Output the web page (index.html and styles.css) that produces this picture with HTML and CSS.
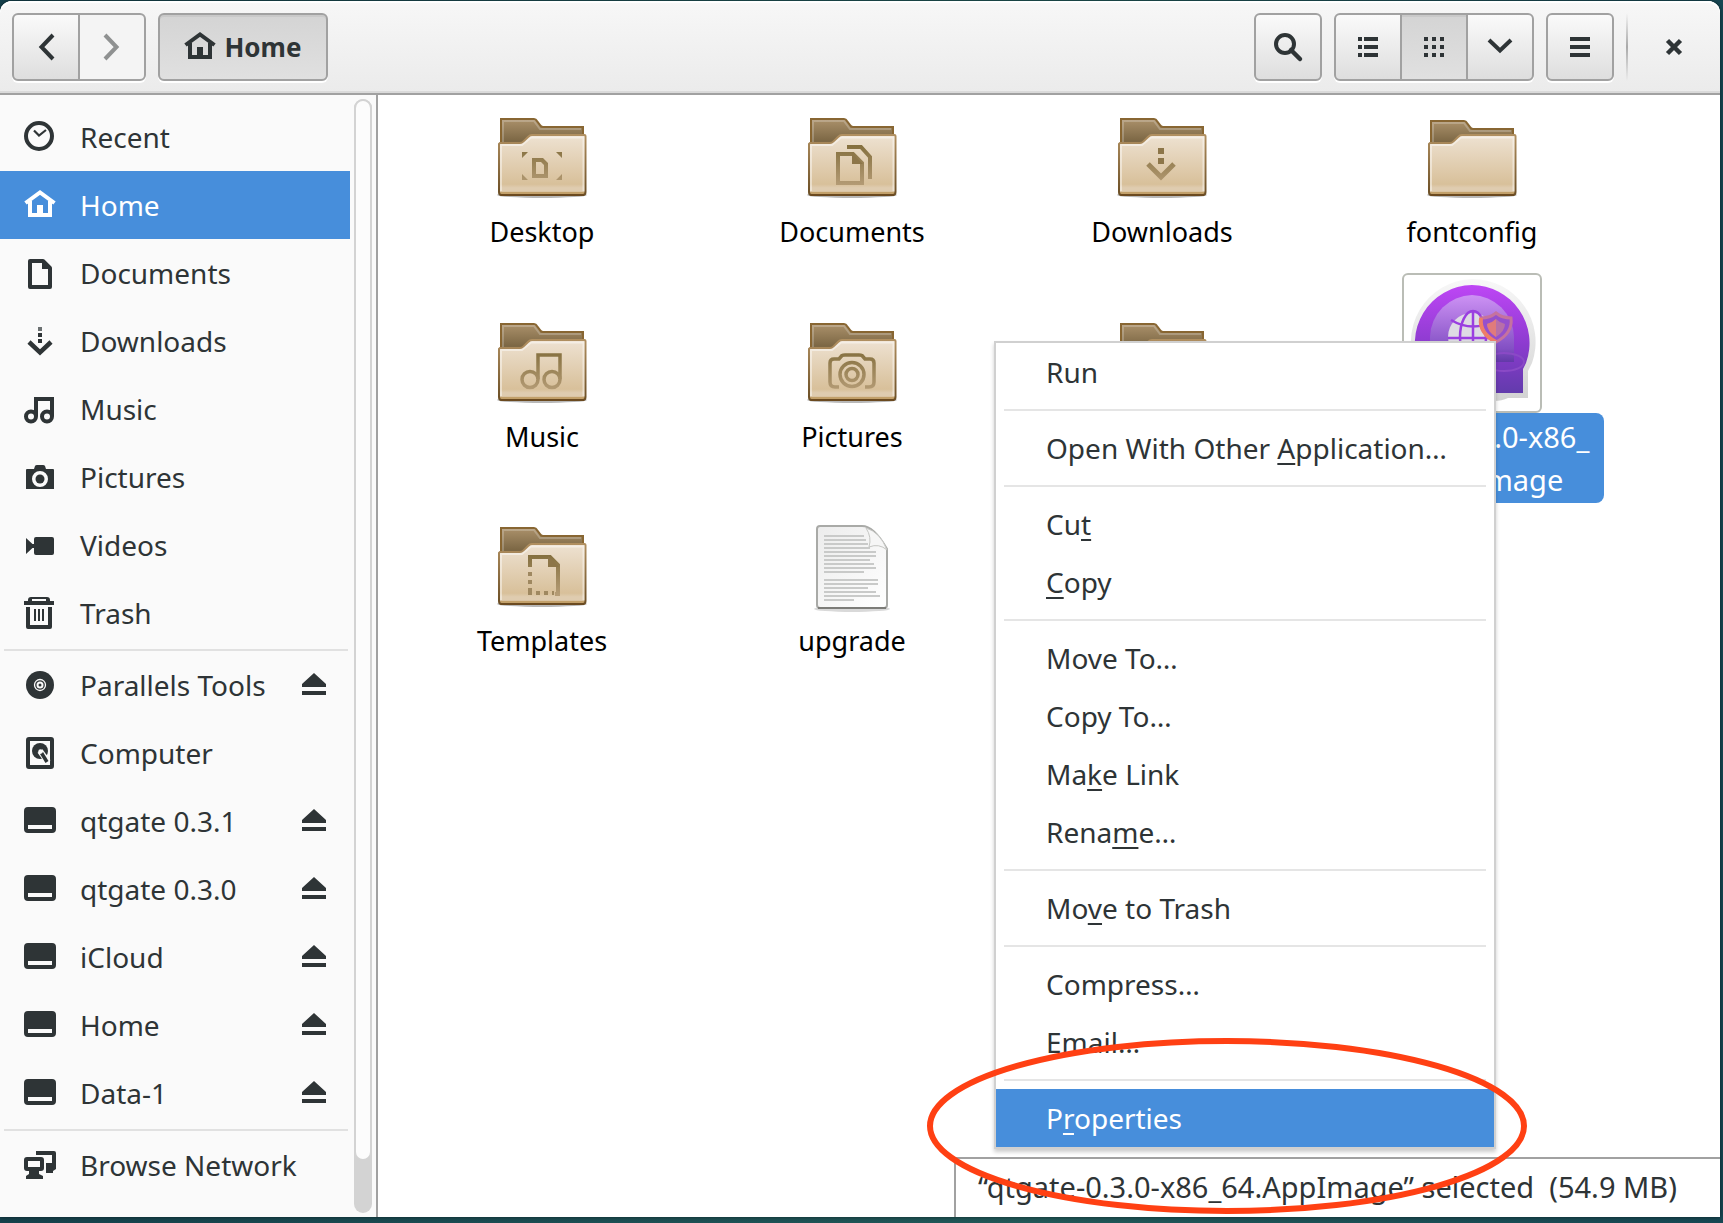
FILE: index.html
```html
<!DOCTYPE html>
<html lang="en">
<head>
<meta charset="utf-8">
<title>Home</title>
<link rel="stylesheet" href="styles.css">
</head>
<body>
<svg class="defs" aria-hidden="true">
  <defs>
    <linearGradient id="g-back" x1="0" y1="0" x2="0" y2="1"><stop offset="0" stop-color="#ab916b"/><stop offset=".5" stop-color="#7d6845"/></linearGradient>
    <linearGradient id="g-front" x1="0" y1="0" x2="0" y2="1"><stop offset="0" stop-color="#eee2d2"/><stop offset=".82" stop-color="#d8c09a"/><stop offset=".88" stop-color="#dfccb0"/><stop offset=".94" stop-color="#dfccb0"/><stop offset=".95" stop-color="#c2a06a"/></linearGradient>
    <linearGradient id="g-edge" x1="0" y1="0" x2="0" y2="1"><stop offset="0" stop-color="#b08f60"/><stop offset="1" stop-color="#6b4e25"/></linearGradient>
    <linearGradient id="g-glyph" gradientUnits="userSpaceOnUse" x1="0" y1="34" x2="0" y2="74"><stop offset="0" stop-color="#85703f"/><stop offset="1" stop-color="#b59c76"/></linearGradient>
    <linearGradient id="g-page" x1="0" y1="0" x2="1" y2="1"><stop offset="0" stop-color="#ececec"/><stop offset="1" stop-color="#ffffff"/></linearGradient>
    <linearGradient id="g-halo" x1="0" y1="0" x2="0" y2="1"><stop offset="0" stop-color="#f8f8f8"/><stop offset="1" stop-color="#d2d2d2"/></linearGradient>
    <linearGradient id="g-head" x1="0" y1="0" x2="0" y2="1"><stop offset="0" stop-color="#be46f5"/><stop offset=".55" stop-color="#8c3bcf"/><stop offset="1" stop-color="#623bac"/></linearGradient>
    <linearGradient id="g-glass" x1="0" y1="0" x2="0" y2="1"><stop offset="0" stop-color="#cd92f4"/><stop offset=".8" stop-color="#8350c4"/><stop offset="1" stop-color="#6239a8"/></linearGradient>
    <symbol id="folder-front" viewBox="0 0 96 96">
      <ellipse cx="48" cy="83" rx="45" ry="3" fill="#000" opacity=".28"/>
      <path d="M6 31H26Q28 31 29.500 29.500L34 25Q36 23 38 23H90.500Q91.500 23 91.500 24V80Q91.500 83 89 83H7.500Q5 83 5 80V32Z" fill="url(#g-front)" stroke="url(#g-edge)" stroke-width="2"/>
      <path d="M7 79V33H28L37 25.500H89.500V79" fill="none" stroke="#fff" stroke-opacity=".45" stroke-width="2"/>
      <path d="M6.500 83H90" stroke="#6b4a20" stroke-width="2"/>
    </symbol>
    <symbol id="folder" viewBox="0 0 96 96">
      <path d="M7 50V7H40Q42 7 43 9L46 13Q47 15 49 15H89V50Z" fill="url(#g-back)" stroke="#886632" stroke-width="2"/>
      <path d="M9 46V9H40L46 17H87" fill="none" stroke="#fff" stroke-opacity=".22" stroke-width="2"/>
      <use href="#folder-front" width="96" height="96"/>
    </symbol>
    <symbol id="folder-plain" viewBox="0 0 96 96">
      <path d="M7 50V9H40Q42 9 43 11L46 15Q47 17 49 17H89V50Z" fill="url(#g-back)" stroke="#886632" stroke-width="2"/>
      <path d="M9 46V11H40L46 19H87" fill="none" stroke="#fff" stroke-opacity=".22" stroke-width="2"/>
      <use href="#folder-front" width="96" height="96"/>
    </symbol>
    <symbol id="i-home" viewBox="0 0 32 32"><path d="M1.500 14 16 3.500 30.500 14M6 12V26H26V12" fill="none" stroke="currentColor" stroke-width="4"/><path d="M13 16h6v10h-6z" fill="currentColor"/></symbol>
    <symbol id="i-drive" viewBox="0 0 32 32"><path fill="currentColor" fill-rule="evenodd" d="M4 2H28Q32 2 32 6V24Q32 28 28 28H4Q0 28 0 24V6Q0 2 4 2ZM4 20V24H28V20Z"/></symbol>
    <symbol id="i-eject" viewBox="0 0 24 32"><path fill="currentColor" d="M12 4 24 15V18H0V15ZM0 22H24V26H0Z"/></symbol>
  </defs>
</svg>

<div class="window">
  <header class="headerbar">
    <div class="linked">
      <button class="btn" aria-label="Back"><svg class="icon" viewBox="0 0 32 32"><path d="M23 4 11.500 16 23 28" fill="none" stroke="currentColor" stroke-width="4"/></svg></button>
      <button class="btn btn-off" aria-label="Forward" disabled><svg class="icon" viewBox="0 0 32 32"><path d="M9 4 20.500 16 9 28" fill="none" stroke="currentColor" stroke-width="4"/></svg></button>
    </div>
    <button class="btn btn-path btn-on"><svg class="icon"><use href="#i-home"/></svg><span>Home</span></button>
    <span class="spacer"></span>
    <button class="btn" aria-label="Search"><svg class="icon" viewBox="0 0 32 32"><circle cx="13" cy="13" r="9" fill="none" stroke="currentColor" stroke-width="4"/><path d="M19 19 28 28" stroke="currentColor" stroke-width="4.500" stroke-linecap="round"/></svg></button>
    <div class="linked">
      <button class="btn" aria-label="List view"><svg class="icon" viewBox="0 0 32 32"><path fill="currentColor" d="M6 6h4v4H6zM12 6h14v4H12zM6 14h4v4H6zM12 14h14v4H12zM6 22h4v4H6zM12 22h14v4H12z"/></svg></button>
      <button class="btn btn-on" aria-label="Grid view"><svg class="icon" viewBox="0 0 32 32"><path fill="currentColor" d="M6 6h4v4H6zM14 6h4v4h-4zM22 6h4v4h-4zM6 14h4v4H6zM14 14h4v4h-4zM22 14h4v4h-4zM6 22h4v4H6zM14 22h4v4h-4zM22 22h4v4h-4z"/></svg></button>
      <button class="btn" aria-label="View options"><svg class="icon" viewBox="0 0 32 32"><path d="M5 9 16 19.500 27 9" fill="none" stroke="currentColor" stroke-width="4"/></svg></button>
    </div>
    <button class="btn" aria-label="Menu"><svg class="icon" viewBox="0 0 32 32"><path fill="currentColor" d="M6 6h20v4H6zM6 14h20v4H6zM6 22h20v4H6z"/></svg></button>
    <span class="divider"></span>
    <button class="close" aria-label="Close"><svg class="icon" viewBox="0 0 32 32"><path d="M9.500 9.500 22.500 22.500M22.500 9.500 9.500 22.500" stroke="currentColor" stroke-width="4.500"/></svg></button>
  </header>

  <div class="content">
    <aside class="sidebar">
      <nav class="places">
        <a class="place" href="#"><svg class="icon" viewBox="0 0 32 32"><circle cx="15" cy="15" r="13" fill="none" stroke="currentColor" stroke-width="4"/><path d="M10 9.500 15 14.500 22 9" fill="none" stroke="currentColor" stroke-width="2.200"/></svg><span class="name">Recent</span></a>
        <a class="place current" href="#"><svg class="icon"><use href="#i-home"/></svg><span class="name">Home</span></a>
        <a class="place" href="#"><svg class="icon" viewBox="0 0 32 32"><path d="M6 4H19L26 11V30H6Z" fill="none" stroke="currentColor" stroke-width="4" stroke-linejoin="round"/><path d="M18 3 27 12H18Z" fill="currentColor"/></svg><span class="name">Documents</span></a>
        <a class="place" href="#"><svg class="icon" viewBox="0 0 32 32"><path d="M14 2h4v4h-4z" fill="currentColor" opacity=".7"/><path d="M14 8h4v4h-4zM14 14h4v4h-4z" fill="currentColor"/><path d="M5 17 16 27.500 27 17" fill="none" stroke="currentColor" stroke-width="4.500"/></svg><span class="name">Downloads</span></a>
        <a class="place" href="#"><svg class="icon" viewBox="0 0 32 32"><path d="M12 23V6H28V23" fill="none" stroke="currentColor" stroke-width="4"/><circle cx="7" cy="23.500" r="5" fill="none" stroke="currentColor" stroke-width="4"/><circle cx="23" cy="23.500" r="5" fill="none" stroke="currentColor" stroke-width="4"/></svg><span class="name">Music</span></a>
        <a class="place" href="#"><svg class="icon" viewBox="0 0 32 32"><path fill="currentColor" fill-rule="evenodd" d="M10 8 11 5Q11.500 4 13 4H19Q20.500 4 21 5L22 8H29Q30 8 30 9V28H2V9Q2 8 3 8ZM16 10A8 8 0 1 0 16 26A8 8 0 1 0 16 10Z"/><circle cx="16" cy="18" r="4.500" fill="currentColor"/></svg><span class="name">Pictures</span></a>
        <a class="place" href="#"><svg class="icon" viewBox="0 0 32 32"><path fill="currentColor" d="M12 8H28Q30 8 30 10V24Q30 26 28 26H12Q10 26 10 24V19H8.500L2 25V9L8.500 15H10V10Q10 8 12 8Z"/></svg><span class="name">Videos</span></a>
        <a class="place" href="#"><svg class="icon" viewBox="0 0 32 32"><path d="M4 10V30H26V10" fill="none" stroke="currentColor" stroke-width="4" stroke-linejoin="round"/><path d="M4 4V3Q4 0 7 0H23Q26 0 26 3V4H30V8H0V4ZM10 12h2v12h-2zM14 12h2v12h-2zM18 12h2v12h-2z" fill="currentColor"/><path d="M8 3H22" stroke="#fafafa" stroke-width="2"/></svg><span class="name">Trash</span></a>
        <hr>
        <div class="place"><svg class="icon" viewBox="0 0 32 32"><circle cx="16" cy="16" r="14" fill="currentColor"/><circle cx="16" cy="16" r="5.500" fill="none" stroke="#fafafa" stroke-width="1.300"/><circle cx="16" cy="16" r="2.500" fill="none" stroke="#fafafa" stroke-width="2"/></svg><a class="name" href="#">Parallels Tools</a><button class="eject" aria-label="Eject Parallels Tools"><svg><use href="#i-eject"/></svg></button></div>
        <a class="place" href="#"><svg class="icon" viewBox="0 0 32 32"><rect x="4" y="2" width="24" height="28" rx="1" fill="none" stroke="currentColor" stroke-width="4"/><circle cx="16" cy="14" r="8" fill="currentColor"/><path d="M16 14 24 25" stroke="#fafafa" stroke-width="6"/><path d="M17.500 16 23 25" stroke="currentColor" stroke-width="3.500"/><circle cx="16.500" cy="14.500" r="2.200" fill="#fafafa"/></svg><span class="name">Computer</span></a>
        <div class="place"><svg class="icon"><use href="#i-drive"/></svg><a class="name" href="#">qtgate 0.3.1</a><button class="eject" aria-label="Eject qtgate 0.3.1"><svg><use href="#i-eject"/></svg></button></div>
        <div class="place"><svg class="icon"><use href="#i-drive"/></svg><a class="name" href="#">qtgate 0.3.0</a><button class="eject" aria-label="Eject qtgate 0.3.0"><svg><use href="#i-eject"/></svg></button></div>
        <div class="place"><svg class="icon"><use href="#i-drive"/></svg><a class="name" href="#">iCloud</a><button class="eject" aria-label="Eject iCloud"><svg><use href="#i-eject"/></svg></button></div>
        <div class="place"><svg class="icon"><use href="#i-drive"/></svg><a class="name" href="#">Home</a><button class="eject" aria-label="Eject Home"><svg><use href="#i-eject"/></svg></button></div>
        <div class="place"><svg class="icon"><use href="#i-drive"/></svg><a class="name" href="#">Data-1</a><button class="eject" aria-label="Eject Data-1"><svg><use href="#i-eject"/></svg></button></div>
        <hr>
        <a class="place" href="#"><svg class="icon" viewBox="0 0 32 32"><path d="M12 4H30V20" fill="none" stroke="currentColor" stroke-width="4" stroke-linejoin="round"/><path d="M22 14H28V18H32V20L29 22V24H22Z" fill="currentColor"/><rect x="2" y="10" width="16" height="10" rx="1" fill="none" stroke="currentColor" stroke-width="4"/><path d="M5 22H15V25L19 27V30H2V27L5 25Z" fill="currentColor"/></svg><span class="name">Browse Network</span></a>
      </nav>
      <div class="scroll"><div class="thumb"></div></div>
    </aside>

    <main class="files">
      <div class="grid">
        <figure class="file"><svg class="pic" viewBox="0 0 96 96"><use href="#folder"/><g fill="url(#g-glyph)"><path d="M28 40H34L28 46ZM62 40H68V46ZM28 62V68H34ZM68 62V68H62Z"/><path fill-rule="evenodd" d="M38 46H49L54 51V66H38ZM42 50V62H50V53L47 50Z"/></g></svg><figcaption>Desktop</figcaption></figure>
        <figure class="file"><svg class="pic" viewBox="0 0 96 96"><use href="#folder"/><g fill="none" stroke="url(#g-glyph)"><path stroke-width="4" d="M34 42H49L58 51V71H34Z"/><path stroke-width="4" d="M43 35H57L66 45V67"/></g><path d="M48 41 59 52H48Z" fill="#8d7649"/></svg><figcaption>Documents</figcaption></figure>
        <figure class="file"><svg class="pic" viewBox="0 0 96 96"><use href="#folder"/><path fill="#8d7649" d="M44 36h6v6h-6zM44 46h6v6h-6z"/><path d="M34 52 47 65 60 52" fill="none" stroke="url(#g-glyph)" stroke-width="5"/></svg><figcaption>Downloads</figcaption></figure>
        <figure class="file"><svg class="pic" viewBox="0 0 96 96"><use href="#folder-plain"/></svg><figcaption>fontconfig</figcaption></figure>
        <figure class="file"><svg class="pic" viewBox="0 0 96 96"><use href="#folder"/><g fill="none" stroke="url(#g-glyph)" stroke-width="3.500"><path d="M44 62V38H66V62"/><circle cx="36" cy="62.500" r="8"/><circle cx="58" cy="62.500" r="8"/></g></svg><figcaption>Music</figcaption></figure>
        <figure class="file"><svg class="pic" viewBox="0 0 96 96"><use href="#folder"/><g fill="none" stroke="url(#g-glyph)" stroke-width="3.500"><path d="M35 70H31Q26 70 26 65V46Q26 42 30 42H35L38 38.500Q39 38 41 38H55Q57 38 58 38.500L61 42H66Q70 42 70 46V65Q70 70 65 70H61"/><circle cx="48" cy="57.500" r="12"/><circle cx="48" cy="57.500" r="6"/></g></svg><figcaption>Pictures</figcaption></figure>
        <figure class="file"><svg class="pic" viewBox="0 0 96 96"><use href="#folder"/></svg></figure>
        <figure class="file selected"><svg class="thumbnail" viewBox="0 0 136 136">
          <path d="M68 4A63 63 0 0 1 128 88L124 96V123H104Q98 126 90 126H14V96A63 63 0 0 1 68 4Z" fill="url(#g-halo)"/>
          <path d="M68 10A58 58 0 0 1 122 88L119 94V118H17V94A58 58 0 0 1 68 10Z" fill="url(#g-head)"/>
          <path d="M68 20A43 43 0 0 1 110 62V87H26V62A43 43 0 0 1 68 20Z" fill="url(#g-glass)"/>
          <circle cx="68" cy="62" r="24" fill="#dedbe4"/>
          <g fill="none" stroke="#9a3fe0" stroke-width="2.500"><path d="M69 37V90M44 63H94M47 45Q69 58 91 45"/><ellipse cx="69" cy="62" rx="13" ry="26"/></g>
          <path d="M92 38Q98 43 107 43Q109 58 92 67Q75 58 77 43Q86 43 92 38Z" fill="#9550cc" stroke="#c5729f" stroke-width="3"/>
          <path d="M92 67Q75 58 77 43" fill="none" stroke="#ee7d68" stroke-width="4"/>
          <path d="M92 44Q96 48 101 49Q101 56 92 62Q83 56 83 49Q88 48 92 44Z" fill="#b86fa8"/>
          <path d="M92 44V62Q83 56 83 49Q88 48 92 44Z" fill="#e07b7c"/>
          <ellipse cx="100" cy="87" rx="20" ry="9" fill="none" stroke="#8a4ac6" stroke-width="2"/>
          </svg><figcaption>qtgate-0.3.0-x86_<br>64.AppImage</figcaption></figure>
        <figure class="file"><svg class="pic" viewBox="0 0 96 96"><use href="#folder"/><path d="M36 46V36H56L64 44V73H61" fill="none" stroke="url(#g-glyph)" stroke-width="4"/><path d="M54 35 65 46H54Z" fill="#8d7649"/><path d="M36 51V70M34 72H60" fill="none" stroke="#9f8860" stroke-width="4" stroke-dasharray="4 4"/></svg><figcaption>Templates</figcaption></figure>
        <figure class="file"><svg class="pic" viewBox="0 0 96 96"><ellipse cx="48" cy="88" rx="38" ry="3" fill="#000" opacity=".15"/><path d="M16 5H58Q70 5 83 28V84Q83 87 80 87H16Q13 87 13 84V8Q13 5 16 5Z" fill="url(#g-page)" stroke="#a9aaa7" stroke-width="2"/><path d="M14 87H82" stroke="#7c7c78" stroke-width="2"/><path d="M20 15H60M20 19H62M20 23H64M20 27H66M20 31H72M20 35H72M20 39H66M20 43H70M20 47H72M20 51H60M20 59H74M20 63H74M20 67H64M20 71H72M20 75H76M20 79H50" stroke="#c9cac9" stroke-width="2"/><path d="M62 7Q68 16 65 26Q75 22 83 29Q76 11 62 7Z" fill="#f6f6f6" stroke="#c5c6c3"/></svg><figcaption>upgrade</figcaption></figure>
      </div>
      <div class="status" role="status">“qtgate-0.3.0-x86_64.AppImage” selected&nbsp; (54.9 MB)</div>
    </main>
  </div>

  <div class="menu" role="menu">
    <button role="menuitem">Run</button>
    <hr>
    <button role="menuitem">Open With Other <u>A</u>pplication…</button>
    <hr>
    <button role="menuitem">Cu<u>t</u></button>
    <button role="menuitem"><u>C</u>opy</button>
    <hr>
    <button role="menuitem">Move To…</button>
    <button role="menuitem">Copy To…</button>
    <button role="menuitem">Ma<u>k</u>e Link</button>
    <button role="menuitem">Rena<u>m</u>e…</button>
    <hr>
    <button role="menuitem">Mo<u>v</u>e to Trash</button>
    <hr>
    <button role="menuitem">Compress…</button>
    <button role="menuitem">Email…</button>
    <hr>
    <button role="menuitem" class="active">P<u>r</u>operties</button>
  </div>

  <svg class="marker" viewBox="0 0 600 176" aria-hidden="true"><ellipse cx="300" cy="88" rx="297" ry="85" fill="none" stroke="#ff4013" stroke-width="6"/></svg>
</div>
</body>
</html>
```
FILE: styles.css
```css
* {
  box-sizing: border-box;
}

body {
  margin: 0;
  min-height: 100vh;
  padding: 1px 3px 6px 0;
  display: flex;
  background: linear-gradient(90deg, #15414c, #215858 60%, #174753);
  color: #2e3436;
  font: 28px/43px "Noto Sans", "Open Sans", sans-serif;
}

button {
  margin: 0;
  padding: 0;
  border: 0;
  background: none;
  color: inherit;
  font: inherit;
}

a {
  color: inherit;
  text-decoration: none;
}

.defs {
  position: absolute;
  width: 0;
  height: 0;
}

.icon {
  width: 32px;
  height: 32px;
  flex: none;
}

.window {
  position: relative;
  flex: 1;
  display: flex;
  flex-direction: column;
  background: #fff;
  border-radius: 12px 12px 0 0;
  box-shadow: 0 0 4px #0008;
}

/* Header bar */
.headerbar {
  display: flex;
  gap: 12px;
  padding: 12px 18px 12px 12px;
  border-bottom: 2px solid #a1a1a1;
  border-radius: 12px 12px 0 0;
  background: linear-gradient(#f7f7f7, #ebebeb);
  box-shadow: inset 0 2px #fff, inset 0 -2px #dadada;
}

.linked {
  display: flex;
}

.btn {
  display: flex;
  align-items: center;
  justify-content: center;
  width: 68px;
  height: 68px;
  border: 2px solid #a1a1a1;
  border-radius: 6px;
  background: linear-gradient(#fafafa, #dedede);
  box-shadow: 0 2px #fff;
}

.linked .btn + .btn {
  margin-left: -2px;
}

.linked .btn:not(:last-child) {
  border-top-right-radius: 0;
  border-bottom-right-radius: 0;
}

.linked .btn:not(:first-child) {
  border-top-left-radius: 0;
  border-bottom-left-radius: 0;
}

.btn-off {
  background: #f4f4f4;
  color: #8f9191;
}

.btn-on {
  background: linear-gradient(#d4d4d4, #e0e0e0);
  box-shadow: inset 0 2px #c9c9c9, 0 2px #fff;
}

.btn-path {
  gap: 8px;
  width: 170px;
  font-size: 26px;
  font-weight: 700;
}

.spacer {
  flex: 1;
}

.divider {
  width: 2px;
  margin-right: 6px;
  background: linear-gradient(transparent, #a9a9a9 50%, transparent);
}

.close {
  display: flex;
  align-items: center;
  justify-content: center;
  width: 56px;
}

/* Sidebar */
.content {
  flex: 1;
  display: flex;
}

.sidebar {
  display: flex;
  width: 378px;
  flex: none;
  border-right: 2px solid #a1a1a1;
  background: #fafafa;
}

.places {
  width: 350px;
  padding-top: 8px;
}

.place {
  display: flex;
  align-items: center;
  gap: 24px;
  height: 68px;
  padding: 0 24px;
}

.place .name {
  flex: 1;
  white-space: nowrap;
}

.current {
  background: #478edb;
  color: #fff;
}

.places hr {
  height: 2px;
  margin: 2px 2px 0 4px;
  border: 0;
  background: #e1e1e1;
}

.eject {
  display: flex;
}

.eject svg {
  width: 24px;
  height: 32px;
}

.scroll {
  width: 18px;
  margin: 4px;
  border-radius: 9px;
  background: #d3d3d3;
}

.thumb {
  height: calc(100% - 52px);
  border: 2px solid #d3d3d3;
  border-radius: 9px;
  background: #fcfcfc;
}

/* Files */
.files {
  position: relative;
  flex: 1;
  color: #000;
}

.grid {
  display: grid;
  grid-template-columns: repeat(auto-fill, 310px);
  align-items: baseline;
  row-gap: 18px;
  padding: 17px 9px;
}

.file {
  display: flex;
  flex-direction: column;
  align-items: center;
  margin: 0;
}

.pic {
  width: 96px;
  height: 96px;
}

.thumbnail {
  width: 140px;
  height: 140px;
  border: 2px solid #babdb6;
  border-radius: 6px;
}

.file figcaption {
  padding: 2px 7px;
  border-radius: 8px;
  font-size: 27px;
  text-align: center;
}

.selected figcaption {
  width: 264px;
  background: #478edb;
  color: #fff;
  font-size: 29px;
}

.status {
  position: absolute;
  right: 0;
  bottom: 0;
  min-width: 766px;
  padding: 6px 24px 9px 22px;
  border: solid #a1a1a1;
  border-width: 2px 0 0 2px;
  background: #fff;
  color: #2e3436;
  font-size: 29px;
  white-space: nowrap;
}

/* Context menu */
.menu {
  position: absolute;
  left: 994px;
  top: 340px;
  width: 502px;
  border: 2px solid #d0d0d0;
  background: #fff;
  box-shadow: 0 3px 4px #0003;
}

.menu button {
  display: block;
  width: 100%;
  height: 58px;
  padding: 0 24px 0 50px;
  text-align: left;
  white-space: nowrap;
}

.menu hr {
  height: 2px;
  margin: 8px;
  border: 0;
  background: #e5e5e5;
}

.menu u {
  text-decoration-thickness: 2px;
  text-underline-offset: 4px;
}

.menu .active {
  background: #478edb;
  color: #fff;
}

.marker {
  position: absolute;
  left: 927px;
  top: 1037px;
  width: 600px;
  height: 176px;
  pointer-events: none;
}
```
